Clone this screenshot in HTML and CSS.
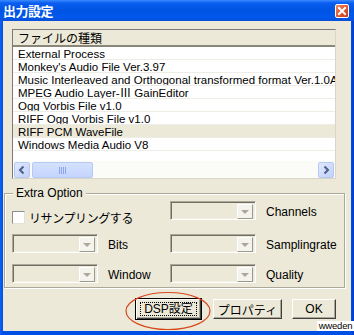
FILE: index.html
```html
<!DOCTYPE html>
<html lang="ja">
<head>
<meta charset="UTF-8">
<meta name="viewport" content="width=device-width, initial-scale=1.0">
<title>出力設定</title>
<link rel="stylesheet" href="styles.css">
</head>
<body>
<div class="window">
    <div class="titlebar">
        <span class="title">出力設定</span>
        <span class="close">
            <svg width="12" height="12" viewBox="0 0 12 12"><path d="M3 3 L9 9 M9 3 L3 9" stroke="#fff" stroke-width="2" stroke-linecap="square"/></svg>
        </span>
    </div>
    <div class="dialog">
        <div class="list">
            <div class="list-head">ファイルの種類</div>
            <div class="rows">
                <div class="row">External Process</div>
                <div class="row">Monkey's Audio File Ver.3.97</div>
                <div class="row">Music Interleaved and Orthogonal transformed format Ver.1.0A</div>
                <div class="row">MPEG Audio Layer-Ⅲ GainEditor</div>
                <div class="row">Ogg Vorbis File v1.0</div>
                <div class="row">RIFF Ogg Vorbis File v1.0</div>
                <div class="row selected">RIFF PCM WaveFile</div>
                <div class="row">Windows Media Audio V8</div>
            </div>
            <div class="hscroll">
                <span class="sbtn">
                    <svg width="14" height="14" viewBox="0 0 14 14"><path d="M8.5 3.5 L5 7 L8.5 10.5" fill="none" stroke="#4d6185" stroke-width="2"/></svg>
                </span>
                <span class="thumb">
                    <svg width="8" height="7" viewBox="0 0 8 7"><path d="M0.5 0 V7 M2.5 0 V7 M4.5 0 V7 M6.5 0 V7" stroke="#8ca5e8" stroke-width="1"/></svg>
                </span>
                <span class="track"></span>
                <span class="sbtn">
                    <svg width="14" height="14" viewBox="0 0 14 14"><path d="M5.5 3.5 L9 7 L5.5 10.5" fill="none" stroke="#4d6185" stroke-width="2"/></svg>
                </span>
            </div>
        </div>

        <div class="group">
            <div class="group-label">Extra Option</div>
            <div class="options">
                <label class="check"><span class="box"></span>リサンプリングする</label>
                <div class="combo"><span class="drop"></span></div>
                <span class="opt-label">Channels</span>

                <div class="combo"><span class="drop"></span></div>
                <span class="opt-label">Bits</span>
                <div class="combo"><span class="drop"></span></div>
                <span class="opt-label">Samplingrate</span>

                <div class="combo"><span class="drop"></span></div>
                <span class="opt-label">Window</span>
                <div class="combo"><span class="drop"></span></div>
                <span class="opt-label">Quality</span>
            </div>
        </div>

        <div class="buttons">
            <button class="btn btn-default"><span class="focus">DSP設定</span></button>
            <button class="btn btn-prop">プロパティ</button>
            <button class="btn btn-ok">OK</button>
        </div>
    </div>
</div>

<svg class="mark" width="90" height="42" viewBox="0 0 90 42"><ellipse cx="44" cy="20" rx="42" ry="18.5" fill="none" stroke="#d8461c" stroke-width="1.2"/></svg>
<div class="watermark">wweden</div>
</body>
</html>
```

FILE: styles.css
```css
body {
    margin: 0;
    font-family: "Liberation Sans", "Noto Sans CJK JP", sans-serif;
    font-size: 12px;
    color: #000;
    background-color: #fff;
}
.window {
    position: relative;
    width: 354px;
    height: 335px;
    display: flex;
    flex-direction: column;
    background: linear-gradient(to right, #1062f0, #0050e6 3px, #0050e6 351px, #0038c8);
}
.titlebar {
    height: 21px;
    display: flex;
    align-items: center;
    justify-content: space-between;
    padding: 0 5px 0 3px;
    background: linear-gradient(to bottom, #3b8cff 0, #0a5ef0 3px, #0054e3 10px, #0058ec 17px, #0a4fd8 21px);
}
.title {
    color: #fff;
    font-family: "Noto Sans CJK JP", sans-serif;
    font-weight: bold;
    font-size: 13px;
    line-height: 15px;
    letter-spacing: -0.5px;
}
.close {
    width: 12px;
    height: 12px;
    display: flex;
    border: 1px solid #fff;
    border-radius: 2px;
    background: linear-gradient(135deg, #f08860, #e0502a 60%, #c83a18);
}
.dialog {
    flex: 1;
    margin: 0 3px 4px 3px;
    padding: 8px 15px 0 9px;
    background-color: #ece9d8;
}

/* list view */
.list {
    height: 150px;
    box-sizing: border-box;
    display: flex;
    flex-direction: column;
    border: 1px solid #7b7b7b;
    border-right-color: #d8d6c8;
    border-bottom-color: #d8d6c8;
    background-color: #fff;
}
.list-head {
    height: 15px;
    line-height: 15px;
    padding-left: 5px;
    background-color: #ece9d8;
    border-bottom: 2px solid #8a8778;
    font-family: "Noto Sans CJK JP", sans-serif;
}
.rows {
    flex: 1;
    overflow: hidden;
}
.row {
    height: 12px;
    line-height: 15px;
    padding-left: 5px;
    white-space: nowrap;
    overflow: hidden;
    border-bottom: 1px solid #eeede5;
    font-size: 11.5px;
}
.row.selected {
    background-color: #ece9d8;
}
.hscroll {
    height: 17px;
    box-sizing: border-box;
    padding: 1px;
    display: flex;
    gap: 1px;
    background-color: #fbfbf8;
}
.sbtn {
    width: 14px;
    height: 14px;
    display: flex;
    border: 1px solid #b6c9f3;
    border-radius: 2px;
    background: linear-gradient(135deg, #e0e9fe, #c0d1fb);
}
.thumb {
    width: 59px;
    height: 14px;
    margin-left: 1px;
    display: flex;
    align-items: center;
    justify-content: center;
    border: 1px solid #b6c9f3;
    border-radius: 2px;
    background: linear-gradient(to bottom, #d4e1fe, #c4d4fc);
}
.track {
    flex: 1;
}

/* Extra Option group */
.group {
    margin: 14px -9px 0 -8px;
    height: 95px;
    box-sizing: border-box;
    border: 1px solid #aca899;
    box-shadow: inset 1px 1px #fff, 1px 1px #fff;
}
.group-label {
    width: fit-content;
    margin: -8px 0 0 8px;
    padding: 0 3px;
    line-height: 14px;
    background-color: #ece9d8;
}
.options {
    display: grid;
    grid-template-columns: 86px 72px 86px auto;
    grid-template-rows: 33px 30px 19px;
    margin: 1px 0 0 7px;
}
.check {
    grid-column: 1 / 3;
    display: flex;
    align-items: center;
    gap: 4px;
    height: 13px;
    margin-top: 10px;
    font-family: "Noto Sans CJK JP", sans-serif;
    letter-spacing: -0.4px;
}
.box {
    width: 11px;
    height: 11px;
    background-color: #fff;
    border: 1px solid #8f8f8f;
    border-right-color: #e4e2d6;
    border-bottom-color: #e4e2d6;
}
.combo {
    width: 86px;
    height: 19px;
    box-sizing: border-box;
    display: flex;
    justify-content: flex-end;
    padding: 2px;
    border: 1px solid #aca899;
    border-right-color: #fff;
    border-bottom-color: #fff;
    box-shadow: inset 1px 1px #716f64, inset -1px -1px #f1efe2;
}
.drop {
    width: 14px;
    height: 13px;
    border: 1px solid #fff;
    border-right-color: #9d9a8a;
    border-bottom-color: #9d9a8a;
    background-color: #f4f3ee;
    position: relative;
}
.drop::after {
    content: "";
    position: absolute;
    left: 3px;
    top: 5px;
    border-left: 4px solid transparent;
    border-right: 4px solid transparent;
    border-top: 4px solid #aca899;
}
.opt-label {
    height: 19px;
    line-height: 22px;
    padding-left: 10px;
}

/* bottom buttons */
.buttons {
    display: flex;
    justify-content: flex-end;
    align-items: center;
    margin-top: 10px;
}
.btn {
    height: 20px;
    padding: 0;
    font-family: "Liberation Sans", "Noto Sans CJK JP", sans-serif;
    font-size: 12px;
    color: #000;
    background-color: #ece9d8;
    border: 1px solid #fff;
    border-right-color: #404040;
    border-bottom-color: #404040;
    box-shadow: inset -1px -1px #aca899;
}
.btn-default {
    width: 67px;
    height: 22px;
    border: 1px solid #000;
    box-shadow: inset 1px 1px #fff, inset -1px -1px #404040, inset -2px -2px #aca899;
    display: flex;
    align-items: center;
    justify-content: center;
}
.focus {
    width: 55px;
    height: 12px;
    line-height: 12px;
    border: 1px dotted #000;
}
.btn-prop {
    width: 69px;
    margin-left: 11px;
    font-family: "Noto Sans CJK JP", sans-serif;
}
.btn-ok {
    width: 44px;
    margin-left: 10px;
}

/* annotation overlays */
.mark {
    position: absolute;
    left: 124px;
    top: 291px;
}
.watermark {
    position: absolute;
    right: 0;
    top: 321px;
    width: 37px;
    height: 10px;
    line-height: 10px;
    font-size: 9.5px;
    letter-spacing: -0.2px;
    text-align: center;
    background-color: #fff;
}
```
